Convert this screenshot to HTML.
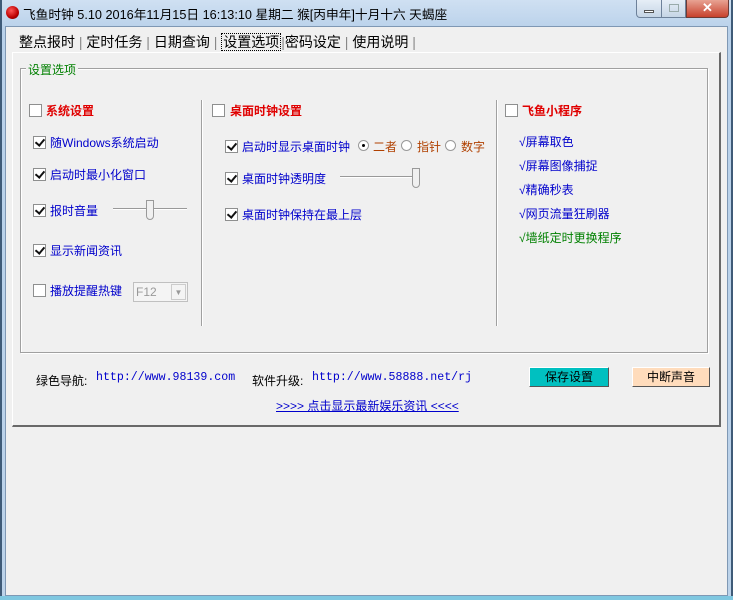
<!DOCTYPE html>
<html><head><meta charset="utf-8"><style>
*{margin:0;padding:0;box-sizing:border-box}
body{width:733px;height:600px;overflow:hidden;background:#f0f0f0;font-family:"Liberation Sans","Noto Sans CJK SC",sans-serif;font-size:12px;position:relative}
.a{position:absolute;white-space:nowrap}
.cb{position:absolute;width:13px;height:13px;border:1px solid #8e8f8f;background:#fff}
.cb.on::after{content:"";position:absolute;left:3px;top:0px;width:4px;height:7px;border:solid #111;border-width:0 2px 2px 0;transform:rotate(40deg)}
.blue{color:#0000cc}
.red{color:#e00000;font-weight:bold}
.rad{position:absolute;width:11px;height:11px;border-radius:50%;border:1px solid #999;background:#fff}
</style></head><body>
<div class="a" style="left:0;top:0;width:733px;height:600px;background:linear-gradient(#cfe0f2,#b9d1ea 30px,#bcd3ea);"></div>
<div class="a" style="left:0;top:0;width:2px;height:600px;background:#3f5b78"></div>
<div class="a" style="right:0;top:0;width:2px;height:600px;background:#3f5b78"></div>
<div class="a" style="left:5px;top:26px;width:723px;height:570px;background:#f0f0f0;border:1px solid #7f98b4"></div>
<div class="a" style="left:0;top:596px;width:733px;height:4px;background:#7fc7e0"></div>
<div class="a" style="left:6px;top:6px;width:13px;height:13px;border-radius:50%;background:radial-gradient(circle at 40% 35%,#f55,#b00 60%,#500)"></div>
<div class="a" style="left:23px;top:4px;font-size:12.7px;color:#000">飞鱼时钟 5.10 2016年11月15日 16:13:10 星期二 猴[丙申年]十月十六 天蝎座</div>
<div class="a" style="left:636px;top:0;width:26px;height:18px;border:1px solid #6d819a;border-top:0;border-radius:0 0 0 4px;background:linear-gradient(#e6eef7,#c5d5e6)"><div class="a" style="left:7px;top:10px;width:10px;height:3px;background:#fff;border:1px solid #555"></div></div>
<div class="a" style="left:661px;top:0;width:25px;height:18px;border:1px solid #6d819a;border-top:0;background:linear-gradient(#e6eef7,#c5d5e6)"><div class="a" style="left:7px;top:4px;width:10px;height:8px;border:1px solid #9aa;"></div></div>
<div class="a" style="left:686px;top:0;width:43px;height:18px;border:1px solid #6d3b36;border-top:0;border-radius:0 0 4px 0;background:linear-gradient(#e8a393,#c7412d);color:#fff;font-weight:bold;font-size:13px;text-align:center;line-height:16px">✕</div>
<div class="a" style="left:12px;top:52px;width:709px;height:375px;border:1px solid #fff;border-right:2px solid #696969;border-bottom:2px solid #696969"></div>
<div class="a" style="left:19px;top:32px;font-size:14px;color:#000">整点报时<span style="color:#888"> | </span>定时任务<span style="color:#888"> | </span>日期查询<span style="color:#888"> | </span><span style="border:1px dotted #000;padding:0 1px">设置选项</span><span style="color:#888">|</span>密码设定<span style="color:#888"> | </span>使用说明<span style="color:#888"> |</span></div>
<div class="a" style="left:20px;top:68px;width:688px;height:285px;border:1px solid #a0a0a0;box-shadow:inset 1px 1px #fff,1px 1px #fff"></div>
<div class="a" style="left:26px;top:61px;background:#f0f0f0;padding:0 2px;color:#008000">设置选项</div>
<div class="a" style="left:201px;top:100px;width:1px;height:226px;background:#a0a0a0;box-shadow:1px 0 #fff"></div>
<div class="a" style="left:496px;top:100px;width:1px;height:226px;background:#a0a0a0;box-shadow:1px 0 #fff"></div>
<div class="cb" style="left:29px;top:104px"></div><div class="a red" style="left:46px;top:102px">系统设置</div>
<div class="cb on" style="left:33px;top:136px"></div><div class="a blue" style="left:50px;top:134px">随Windows系统启动</div>
<div class="cb on" style="left:33px;top:168px"></div><div class="a blue" style="left:50px;top:166px">启动时最小化窗口</div>
<div class="cb on" style="left:33px;top:204px"></div><div class="a blue" style="left:50px;top:202px">报时音量</div>
<div class="a" style="left:113px;top:208px;width:74px;height:2px;background:#999;border-bottom:1px solid #fff"></div>
<div class="a" style="left:146px;top:200px;width:8px;height:20px;background:#f0f0f0;border:1px solid #999;border-radius:0 0 4px 4px"></div>
<div class="cb on" style="left:33px;top:244px"></div><div class="a blue" style="left:50px;top:242px">显示新闻资讯</div>
<div class="cb" style="left:33px;top:284px"></div><div class="a blue" style="left:50px;top:282px">播放提醒热键</div>
<div class="a" style="left:133px;top:282px;width:55px;height:20px;border:1px solid #c0c0c0;background:#f4f4f4;color:#999;padding:2px 0 0 2px">F12</div>
<div class="a" style="left:171px;top:284px;width:15px;height:16px;border:1px solid #ccc;color:#999;font-size:8px;text-align:center;line-height:15px">▼</div>
<div class="cb" style="left:212px;top:104px"></div><div class="a red" style="left:230px;top:102px">桌面时钟设置</div>
<div class="cb on" style="left:225px;top:140px"></div><div class="a blue" style="left:242px;top:138px">启动时显示桌面时钟</div>
<div class="rad" style="left:358px;top:140px"><div class="a" style="left:3px;top:3px;width:3px;height:3px;background:#000;border-radius:50%"></div></div>
<div class="a" style="left:373px;top:138px;color:#b04000">二者</div>
<div class="rad" style="left:401px;top:140px"></div>
<div class="a" style="left:417px;top:138px;color:#b04000">指针</div>
<div class="rad" style="left:445px;top:140px"></div>
<div class="a" style="left:461px;top:138px;color:#b04000">数字</div>
<div class="cb on" style="left:225px;top:172px"></div><div class="a blue" style="left:242px;top:170px">桌面时钟透明度</div>
<div class="a" style="left:340px;top:176px;width:78px;height:2px;background:#999;border-bottom:1px solid #fff"></div>
<div class="a" style="left:412px;top:168px;width:8px;height:20px;background:#f0f0f0;border:1px solid #999;border-radius:0 0 4px 4px"></div>
<div class="cb on" style="left:225px;top:208px"></div><div class="a blue" style="left:242px;top:206px">桌面时钟保持在最上层</div>
<div class="cb" style="left:505px;top:104px"></div><div class="a red" style="left:522px;top:102px">飞鱼小程序</div>
<div class="a blue" style="left:519px;top:133px">√屏幕取色</div>
<div class="a blue" style="left:519px;top:157px">√屏幕图像捕捉</div>
<div class="a blue" style="left:519px;top:181px">√精确秒表</div>
<div class="a blue" style="left:519px;top:205px">√网页流量狂刷器</div>
<div class="a" style="left:519px;top:229px;color:#008000">√墙纸定时更换程序</div>
<div class="a" style="left:36px;top:372px">绿色导航:</div>
<div class="a" style="left:96px;top:371px;color:#0000cc;font-family:'Liberation Mono',monospace;font-size:11.6px">http://www.98139.com</div>
<div class="a" style="left:252px;top:372px">软件升级:</div>
<div class="a" style="left:312px;top:371px;color:#0000cc;font-family:'Liberation Mono',monospace;font-size:11.6px">http://www.58888.net/rj</div>
<div class="a" style="left:529px;top:367px;width:80px;height:20px;background:#00c0c0;border:1px solid;border-color:#fff #555 #555 #fff;text-align:center;line-height:18px">保存设置</div>
<div class="a" style="left:632px;top:367px;width:78px;height:20px;background:#ffdcbc;border:1px solid;border-color:#fff #555 #555 #fff;text-align:center;line-height:18px">中断声音</div>
<div class="a" style="left:276px;top:397px;color:#0000cc;text-decoration:underline">&gt;&gt;&gt;&gt; 点击显示最新娱乐资讯 &lt;&lt;&lt;&lt;</div>
</body></html>
